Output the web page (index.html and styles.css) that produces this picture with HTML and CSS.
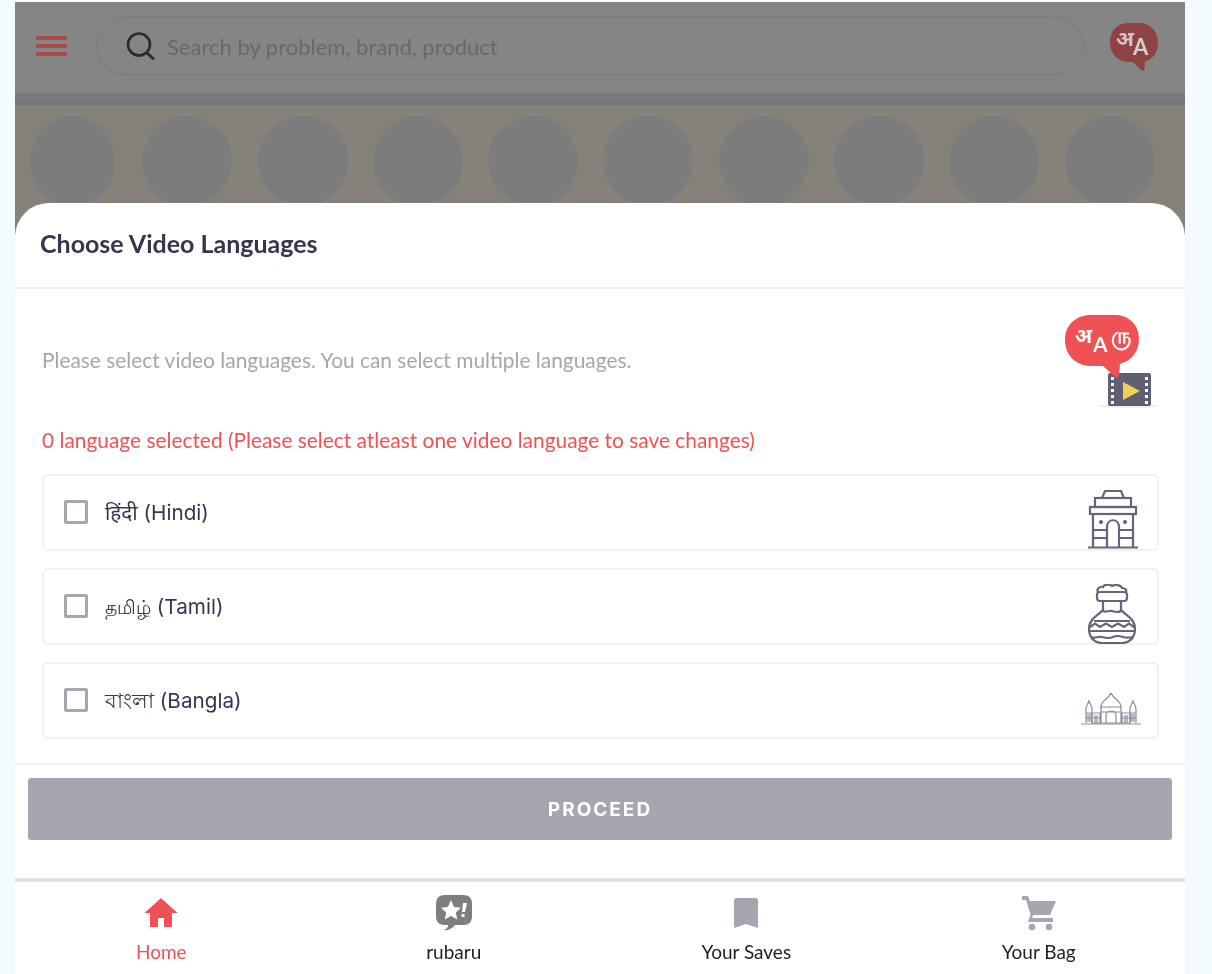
FILE: index.html
```html
<!DOCTYPE html>
<html lang="en">
<head>
<meta charset="utf-8">
<title>Choose Video Languages</title>
<link rel="stylesheet" href="styles.css">
</head>
<body>
<div class="shell">
  <header class="topbar">
    <div class="burger"><span></span><span></span><span></span></div>
    <div class="search">
      <svg class="search-icon" width="32" height="32" viewBox="0 0 32 32"><circle cx="15" cy="14.5" r="11" fill="none" stroke="#2b2b2b" stroke-width="2.6"/><path d="M23 23l6 5.500" stroke="#2b2b2b" stroke-width="3" stroke-linecap="round"/></svg>
      <span class="placeholder">Search by problem, brand, product</span>
    </div>
    <div class="lang-badge">
      <svg class="bubble" width="50" height="50" viewBox="0 0 50 50"><path d="M20 1h10c11 0 19 8 19 19 0 11-6 18-13 19.500l-.5 8c-.5 2-2 2-3.500.5L24 40h-4C9 40 1 32 1 20S9 1 20 1z" fill="#8d4343"/></svg>
      <span class="badge-hi">अ</span><span class="badge-a">A</span>
    </div>
  </header>
  <div class="strip"></div>
  <div class="banner">
    <i class="dot dot-first"></i><i class="dot"></i><i class="dot"></i><i class="dot"></i><i class="dot"></i><i class="dot"></i><i class="dot"></i><i class="dot"></i><i class="dot"></i><i class="dot"></i>
  </div>

  <section class="sheet">
    <h1 class="sheet-title">Choose Video Languages</h1>
    <div class="sheet-body">
      <div class="intro">
        <p class="desc">Please select video languages. You can select multiple languages.</p>
        <div class="lang-art">
          <svg width="96" height="96" viewBox="0 0 96 96">
            <ellipse cx="64" cy="92" rx="30" ry="1.800" fill="#eeeeee"/>
            <rect x="44" y="59" width="43" height="33" rx="2" fill="#5f6072"/>
            <g fill="#fff"><rect x="47" y="63" width="3" height="3"/><rect x="47" y="69" width="3" height="3"/><rect x="47" y="75" width="3" height="3"/><rect x="47" y="81" width="3" height="3"/><rect x="47" y="87" width="3" height="3"/><rect x="81" y="63" width="3" height="3"/><rect x="81" y="69" width="3" height="3"/><rect x="81" y="75" width="3" height="3"/><rect x="81" y="81" width="3" height="3"/><rect x="81" y="87" width="3" height="3"/></g>
            <path d="M59 68l17 9-17 9z" fill="#f3cf55"/>
            <path d="M27 1h24c14 0 24 10 24 24 0 13-8 22-19 25l-1 11c-.5 3-3 3-5 1L39 52H27C12 52 1 41 1 26 1 11 12 1 27 1z" fill="#f05155"/>
          </svg>
          <span class="art-hi">अ</span><span class="art-a">A</span><span class="art-ta">ரு</span>
        </div>
      </div>
      <p class="warning">0 language selected (Please select atleast one video language to save changes)</p>
      <ul class="options">
        <li class="option">
          <span class="check"></span><span class="option-label">हिंदी (Hindi)</span>
          <svg class="art gate" width="52" height="60" viewBox="0 0 52 60" fill="none" stroke="#64657a" stroke-width="2.200">
            <path d="M15 9l3-7h16l3 7"/><rect x="8" y="9" width="36" height="9"/><rect x="3" y="18" width="46" height="7"/>
            <path d="M6 25v33M46 25v33M1 58.500h50M6 41h14M32 41h14M6 49h14M32 49h14"/>
            <path d="M20 58V38c0-9 12-9 12 0v20"/>
            <circle cx="14" cy="33" r="1" fill="#64657a"/><circle cx="38" cy="33" r="1" fill="#64657a"/>
          </svg>
        </li>
        <li class="option">
          <span class="check"></span><span class="option-label"><span class="native-ta">தமிழ்</span> (Tamil)</span>
          <svg class="art pot" width="50" height="60" viewBox="0 0 50 60" fill="none" stroke="#64657a" stroke-width="2.200">
            <path d="M11 8c-2-3 2-6 5-5 1-3 7-3 9-1 3-2 9-1 10 2 3 0 5 2 4 4"/>
            <rect x="10" y="8" width="30" height="9" rx="3"/>
            <path d="M16 17v9c-3 4-14 8-14 19 0 9 6 14 13 14h20c7 0 13-5 13-14 0-11-11-15-14-19v-9"/>
            <path d="M16 27c3 2 6-1 9 0s6 2 9 0M7 37h36M3 43l5-3.500 5 3.500 6-3.500 6 3.500 6-3.500 6 3.500 5-3.500 5 3.500M2 47h46M4 53c4 2 7-1 11 0s7 2 11 0 7-1 10 0 6 1 10 0"/>
          </svg>
        </li>
        <li class="option">
          <span class="check"></span><span class="option-label">বাংলা (Bangla)</span>
          <svg class="art palace" width="60" height="32" viewBox="0 0 60 32" fill="none" stroke="#8b8c9c" stroke-width="1.200">
            <path d="M0 31h60M5 30V16c0-3 2-5 3-8 1 3 3 5 3 8v14M49 30V16c0-3 2-5 3-8 1 3 3 5 3 8v14"/>
            <path d="M11 20h8v10H11zM41 20h8v10h-8zM20 14c0-7 7-7 10-14 3 7 10 7 10 14v16H20z"/>
            <path d="M19 14h22M25 30v-8c0-5 10-5 10 0v8M5 20h6M49 20h6M5 25h6M49 25h6M11 25h8M41 25h8M20 19h20M14 22v8M16 22v8M44 22v8M46 22v8M7 21v8M9 21v8M51 21v8M53 21v8"/>
          </svg>
        </li>
      </ul>
    </div>
    <div class="sheet-footer">
      <button class="proceed" type="button">PROCEED</button>
    </div>
  </section>

  <nav class="tabbar">
    <a class="tab tab-active">
      <span class="tab-icon"><svg width="36" height="32" viewBox="0 0 36 32"><path d="M18 1L1.500 16H7v14h8v-9h6v9h8V16h5.500z" fill="#f05155"/></svg></span>
      <span>Home</span>
    </a>
    <a class="tab">
      <span class="tab-icon"><svg width="38" height="38" viewBox="0 0 38 38"><path d="M10 1h18c6 0 9 3 9 9v12c0 6-3 9-9 9h-8c-2 3-7 6-11 5 3-1 4-3 4-5h-3c-6 0-9-3-9-9V10c0-6 3-9 9-9z" fill="#7e7e7e"/><path d="M16 6l3 7 7 .7-5.200 4.800 1.500 7L16 22l-6.300 3.500 1.500-7L6 13.700l7-.7z" fill="#fff"/><path d="M28 9h4l-2 9h-3zM26.500 20h3v3h-3z" fill="#fff"/></svg></span>
      <span>rubaru</span>
    </a>
    <a class="tab">
      <span class="tab-icon"><svg width="26" height="32" viewBox="0 0 26 32"><path d="M3 1h20c1 0 2 1 2 2v28l-12-4-12 4V3c0-1 1-2 2-2z" fill="#a5a6b0"/></svg></span>
      <span>Your Saves</span>
    </a>
    <a class="tab">
      <span class="tab-icon"><svg width="36" height="36" viewBox="0 0 36 36"><path d="M1 1h6l2 5h26l-6 14H12l-1 3h21v4H7l2.500-7.500L5 5H1z" fill="#a5a6b0"/><circle cx="11" cy="32" r="3.300" fill="#a5a6b0"/><circle cx="28" cy="32" r="3.300" fill="#a5a6b0"/></svg></span>
      <span>Your Bag</span>
    </a>
  </nav>
</div>
</body>
</html>
```
FILE: styles.css
```css
* { box-sizing: border-box; }
html, body { margin: 0; padding: 0; }
body {
  background: #f3fbff;
  font-family: "Lato", "Noto Sans", sans-serif;
  overflow: hidden;
}
.shell {
  position: relative;
  width: 1170px;
  height: 972px;
  margin: 2px 0 0 15px;
  display: flex;
  flex-direction: column;
  background: #fff;
  filter: blur(0.4px);
}
.topbar {
  height: 91px;
  display: flex;
  align-items: center;
  background: #858585;
  padding: 0 26px 3px 21px;
  flex: none;
}
.burger { width: 31px; display: flex; flex-direction: column; gap: 4px; margin-right: 29px; }
.burger span { display: block; height: 4px; background: #a84a4a; }
.search {
  flex: 1;
  height: 58px;
  border: 1px solid #7b7b7b;
  border-radius: 29px;
  display: flex;
  align-items: center;
  padding-left: 27px;
  gap: 11px;
}
.placeholder { font-size: 22px; color: #686868; white-space: nowrap; }
.lang-badge { position: relative; width: 50px; height: 50px; margin-left: 25px; margin-top: 2px; }
.bubble { display: block; }
.badge-hi { position: absolute; left: 7px; top: 0; color: #d6c2c2; font: 700 21px "Noto Sans CJK SC", "Noto Sans Devanagari", "Noto Sans", sans-serif; }
.badge-a { position: absolute; left: 24px; top: 11px; color: #d6cccc; font: 700 22px "Lato", sans-serif; }
.strip { height: 12px; flex: none; background: linear-gradient(#7c7c7f, #75757a); }
.banner {
  height: 130px;
  flex: none;
  background: #86827a;
  display: flex;
  gap: 25.300px;
  padding: 11px 0 0 15px;
  overflow: hidden;
}
.dot { flex: none; width: 90px; height: 90px; border-radius: 50%; background: #7c7c7c; }
.dot-first { width: 85px; margin-right: 2px; }
.sheet {
  position: absolute;
  left: 0;
  right: 0;
  top: 201px;
  height: 679px;
  background: #fff;
  border-radius: 34px 34px 0 0;
  display: flex;
  flex-direction: column;
  border-bottom: 4px solid #e2e2e6;
}
.sheet-title {
  margin: 0;
  height: 86px;
  flex: none;
  padding: 24px 0 0 25px;
  font-size: 25px;
  font-weight: 700;
  line-height: 32px;
  color: #35364f;
  border-bottom: 2px solid #f0f0f2;
}
.sheet-body { flex: 1; padding: 24px 26px 0 27px; display: flex; flex-direction: column; }
.intro { display: flex; justify-content: space-between; height: 98px; align-items: flex-start; }
.desc { margin: 33px 0 0; font-size: 20.900px; line-height: 28px; color: #a5a6b0; }
.lang-art { position: relative; width: 96px; height: 96px; flex: none; margin-right: -1px; margin-top: 1px; }
.lang-art svg { display: block; }
.art-hi, .art-a, .art-ta { position: absolute; color: #fff; font-weight: 700; font-family: "Noto Sans CJK SC", "Noto Sans", sans-serif; }
.art-hi { left: 11px; top: 6px; font-size: 20px; }
.art-a { left: 29px; top: 17px; font-size: 21px; font-family: "Lato", sans-serif; }
.art-ta { left: 47px; top: 3px; font-size: 22px; }
.warning { margin: 15px 0 0; font-size: 20.900px; line-height: 28px; color: #f05155; }
.options { list-style: none; margin: 20px 0 0; padding: 0; display: flex; flex-direction: column; gap: 17px; }
.option {
  height: 77px;
  border: 2px solid #f0f0f2;
  border-radius: 6px;
  display: flex;
  align-items: center;
  padding-left: 20px;
  position: relative;
}
.check { width: 24px; height: 24px; border: 3px solid #a5a6b0; border-radius: 2px; flex: none; margin-top: -2px; }
.option-label { margin-left: 17px; font: 400 20.700px/28px "Inter", "Noto Sans", sans-serif; color: #35364f; }
.native-ta { font-size: 18.500px; }
.art { margin-left: auto; align-self: flex-end; flex: none; }
.gate { margin-right: 18px; }
.pot { margin-right: 20px; margin-bottom: -1px; }
.palace { margin-right: 16px; margin-bottom: 12px; }
.sheet-footer { flex: none; height: 115px; border-top: 2px solid #f0f0f2; padding: 13px 13px 0 13px; }
.proceed {
  display: block;
  width: 100%;
  height: 62px;
  border: 0;
  border-radius: 3px;
  background: #a5a6b0;
  color: #fff;
  font: 700 19px "Inter", sans-serif;
  letter-spacing: 2px;
}
.tabbar {
  position: absolute;
  left: 0;
  right: 0;
  bottom: 0;
  height: 92px;
  display: grid;
  grid-template-columns: repeat(4, 1fr);
  background: #fff;
}
.tab {
  display: flex;
  flex-direction: column;
  align-items: center;
  justify-content: flex-end;
  gap: 6px;
  padding-bottom: 8px;
  color: #1f1f1f;
  font-size: 19px;
  line-height: 28px;
}
.tab-icon { height: 38px; display: flex; align-items: center; }
.tab-active { color: #f05155; }
```
